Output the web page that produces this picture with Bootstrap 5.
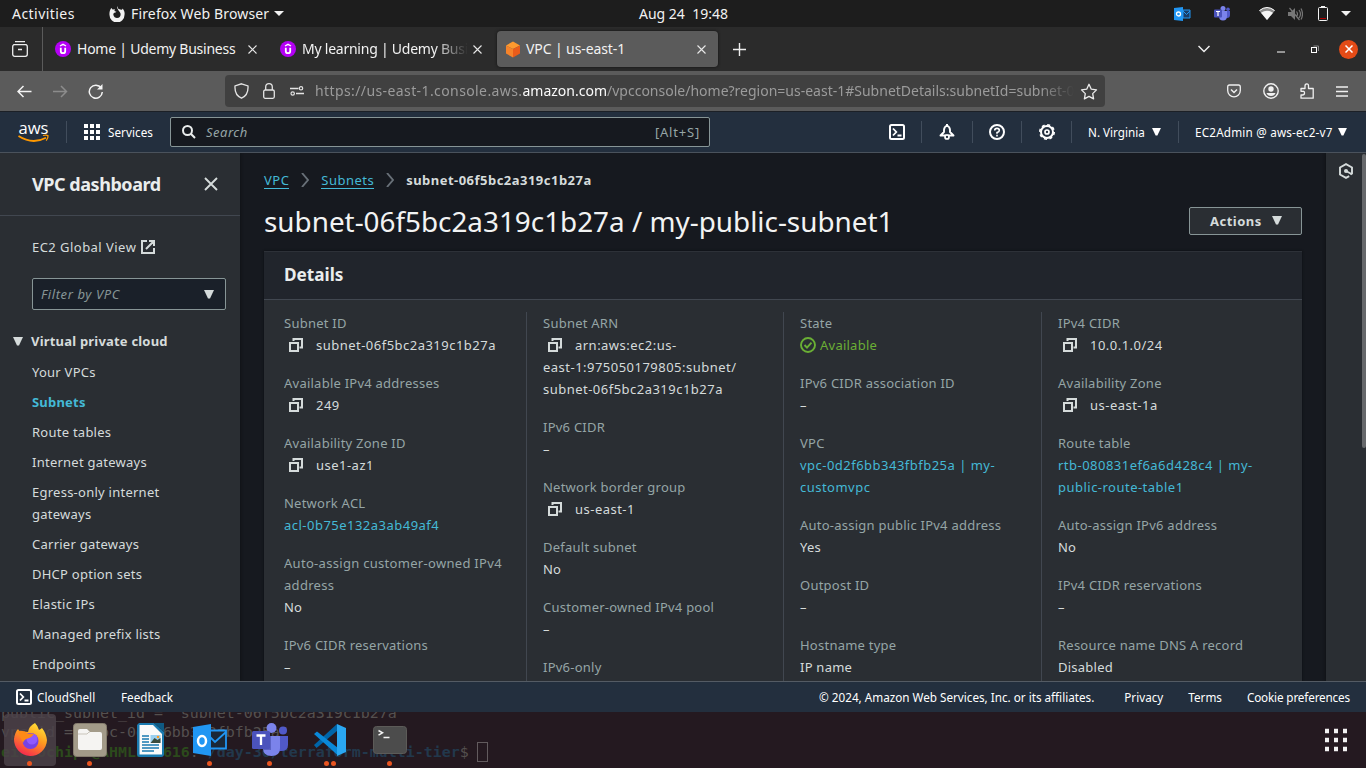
<!DOCTYPE html>
<html lang="en">
<head>
<meta charset="utf-8">
<title>VPC | us-east-1</title>
<link href="https://cdn.jsdelivr.net/npm/bootstrap@5.3.0/dist/css/bootstrap.min.css" rel="stylesheet">
<style>
:root{--line:#414750;--panel:#2a2e33;--navy:#232f3e;--txt:#d5dbdb;--mut:#95a5a6;--link:#44b9d6}
body{width:1366px;height:768px;overflow:hidden;background:#16191f;font-family:"Noto Sans",sans-serif;font-size:13px;line-height:22px;color:var(--txt)}
svg{flex:none;display:block}
.ui{font-family:"Noto Sans",sans-serif;font-size:14px;color:#f2f2f2;white-space:nowrap}
.sysbar{height:27px;background:#1d1d1d}
.tabs-row{height:44px;background:#2b2b2b}
.tabview{width:43px;border-right:1px solid #5b5b5b}
.btab{height:36px;border-radius:4px}
.t1{letter-spacing:-.24px}
.btab.current{background:#5b5b5b;width:221px;box-shadow:0 0 3px #111}
.toolrow{height:41px;background:#5b5b5b;border-bottom:1px solid #1c2026}
.urlbox{width:880px;height:32px;border-radius:4px;background:#404040;color:#9b9b9b;margin-left:121px}
.fade-end{-webkit-mask-image:linear-gradient(90deg,#000 calc(100% - 34px),transparent);mask-image:linear-gradient(90deg,#000 calc(100% - 34px),transparent)}
.closer{width:19px;height:19px;border-radius:50%;background:#e44b17}
.awsnav{height:41px;background:var(--navy);border-bottom:1px solid #4a525c;color:#fff;font-size:11.7px;white-space:nowrap}
.vsep{width:1px;height:22px;background:#414d5c;flex:none}
.awsearch{width:540px;height:30px;background:#16191f;border:1px solid #879596;border-radius:2px;color:#95a5a6;font-size:13px;letter-spacing:.5px}
.stage{height:528px;overflow:hidden}
.side{width:240px;background:var(--panel);box-shadow:0 0 3px #0c0e11;letter-spacing:.2px;flex:none}
.side-head{height:63px;border-bottom:1px solid var(--line);padding:0 22px 0 32px}
.side-head h2{font-size:18px;font-weight:700;margin:1px 0 0;color:#eaeded;letter-spacing:-.45px}
.vpcfilter{width:194px;height:32px;border:1px solid #879596;border-radius:2px;background:#1a2029;color:#879596;margin:20px 0 0 32px;letter-spacing:.6px}
.side ul{padding-left:32px;width:215px;letter-spacing:.25px}
.side li{margin-bottom:8px}
.on{color:var(--link);font-weight:700;letter-spacing:.2px}
.work{padding:0 24px;width:1086px;flex:none}
.crumbs{height:22px;margin-top:16px;letter-spacing:.48px}
.crumbs a{color:var(--link);text-decoration:none;border-bottom:1px solid;line-height:16px}
h1{font-size:27.85px;margin:1px 0 0;color:#f2f3f3;font-weight:400;white-space:nowrap}
.actbtn{width:113px;height:28px;border:1px solid #879596;border-radius:2px;background:var(--panel);color:var(--txt);font-weight:700;font-size:13px;letter-spacing:.5px;padding:0 0 0 20px;margin-top:-1px}
.panelbox{background:var(--panel);border-top:1px solid #2d3138;height:460px;box-shadow:0 0 2px #0c0e11}
.panel-head{height:48px;background:#21252c;border-bottom:1px solid var(--line);font-size:17.200px;font-weight:700;color:#eaeded;padding:0 0 2px 20px}
.kcols{padding:12px 0 0 20px;height:412px}
.kcol{letter-spacing:.24px;overflow:hidden}
.kcol+.kcol{border-left:1px solid var(--line);padding-left:16px}
.kcol dl{margin:0}
.kcol dt{font-weight:400;color:var(--mut)}
.kcol dd{margin:0 0 16px}
.kcol .val{letter-spacing:.48px}
.kcol a{color:var(--link);text-decoration:none}
.cp{display:inline-block;width:14px;height:14px;margin:0 13px 0 5px;vertical-align:-2px}
.w1{width:242px}.w2{width:257px}.w3{width:258px}.w4{width:258px}
.rail{width:40px;background:var(--panel);box-shadow:0 0 3px #0c0e11;padding:10px 0 0 13px;flex:none}
.scrollthumb{top:154px;right:0;width:4px;height:294px;background:#66686b;border-radius:2px}
.foot{height:31px;background:var(--navy);border-top:1px solid #545b64;color:#fff;font-size:11.7px;white-space:nowrap;position:relative}
.dock{height:56px;background:#241920;overflow:hidden}
.term{left:1px;top:-8px;font:14.950px/19px "DejaVu Sans Mono",monospace;color:#54504f;white-space:pre;margin:0;overflow:hidden}
.term b{color:#2c4a1c}.term i{font-style:normal;font-weight:700;color:#22384c}
.cursorbox{display:inline-block;width:11px;height:20px;border:1px solid #625b5e;vertical-align:-5px;margin-left:-1px}
.app{width:60px;height:56px;padding-top:11px}
.app.lit::before{content:"";position:absolute;left:4px;top:2px;width:52px;height:52px;border-radius:4px;background:#4b4249d9}
.app svg{position:relative}
.pip{width:5px;height:5px;border-radius:50%;background:#e95420}
.pips{gap:2px;left:0;right:1px;bottom:2px}
</style>
<script src="https://cdn.jsdelivr.net/npm/bootstrap@5.3.0/dist/js/bootstrap.bundle.min.js"></script>
</head>
<body class="d-flex flex-column">
<svg width="0" height="0" class="position-absolute">
<symbol id="copy" viewBox="0 0 14 14"><path d="M1 5h8v8H1zM4.500 3V1H13v8.500h-2.500" fill="none" stroke="#d5dbdb" stroke-width="2"/></symbol>
<symbol id="x" viewBox="0 0 9 9"><path d="M.5.5l8 8m0-8l-8 8" stroke="#e8e8e8" stroke-width="1.100" fill="none"/></symbol>
<symbol id="tri" viewBox="0 0 10 9"><path d="M0 0h10L6 8.500H4z" fill="currentColor"/></symbol>
<symbol id="udemy" viewBox="0 0 16 16"><circle cx="8" cy="8" r="8" fill="#b400f5"/><path d="M5 5L8 3.400 11 5" fill="none" stroke="#fff" stroke-width="1.400"/><path d="M5.800 6.800v3.400q0 2 2.200 2t2.200-2V6.800" fill="none" stroke="#fff" stroke-width="1.800"/></symbol>
<symbol id="shell" viewBox="0 0 16 16"><rect x="1" y="1" width="14" height="14" rx="1.500" fill="none" stroke="#fff" stroke-width="2"/><path d="M4 4.500L7.300 8 4 11.500M8.500 11.500h4" fill="none" stroke="#fff" stroke-width="1.800"/></symbol>
</svg>

<div class="sysbar ui d-flex align-items-center">
<span style="margin-left:12px;width:97px;letter-spacing:.45px">Activities</span>
<svg width="16" height="16" viewBox="0 0 16 16"><path d="M8 0l1.500 3C13 4 13.500 4 13.500 2.500 15 4 16 6 15.500 9A7.500 7.500 0 0 1 .5 9C.2 6 1 3.500 2.500 2l1 1.500L6 3.200C5 5 5.500 5.500 7.500 5.800 6 7 4.500 6.500 4.300 8.500 4.500 11 6.500 12 8 12c3 0 4-2.500 3.500-4.500C11 5.500 8 4 8 0z" fill="#f2f2f2"/></svg>
<span style="margin-left:6px;width:143px;letter-spacing:.15px">Firefox Web Browser</span>
<svg width="10" height="5"><path d="M0 0h10L5 5z" fill="#f2f2f2"/></svg>
<span style="margin-left:355px">Aug 24&nbsp; 19:48</span>
<div class="d-flex align-items-center ms-auto" style="padding-right:15px">
<svg width="17" height="14" viewBox="0 0 17 14"><path d="M9 3h7v8H9z" fill="#1a3d66" stroke="#2196f3"/><path d="M9 4l3.500 3.500L16 4" stroke="#2196f3" fill="none"/><path d="M0 1l9-1v14l-9-1z" fill="#2196f3"/><circle cx="4.500" cy="7" r="2" fill="none" stroke="#fff" stroke-width="1.300"/></svg>
<svg style="margin-left:23px" width="17" height="15" viewBox="0 0 17 15"><circle cx="9" cy="2.500" r="2.500" fill="#7b83eb"/><circle cx="14" cy="3.200" r="1.800" fill="#5059c9"/><path d="M11 5h5v4q0 3-3 3h-2z" fill="#5059c9"/><path d="M5 5h8v5q0 4.500-4 4.500T5 10z" fill="#7b83eb"/><rect y="3.500" width="8" height="8" rx="1" fill="#4b53bc"/><path d="M2 5.500h4M4 5.500v4.500" stroke="#fff" stroke-width="1.200"/></svg>
<svg style="margin-left:28px" width="16" height="13" viewBox="0 0 16 13"><path d="M8 13L0 3.500Q8-3 16 3.500z" fill="#8c8c8c"/><path d="M8 13L2 5.800Q8 1.500 14 5.800z" fill="#f6f6f6"/><path d="M.5 3.500Q8-2.500 15.500 3.500" fill="none" stroke="#fff"/></svg>
<svg style="margin-left:13px" width="15" height="14" viewBox="0 0 15 14"><path d="M0 5h3l4-4v12L3 9H0z" fill="#777"/><path d="M8.500 4.500q2 2.500 0 5M11 3q3 4 0 8M13 1.500q3 5.500 0 11M1.500 1l10 12" stroke="#777" fill="none" stroke-width="1.200"/></svg>
<svg style="margin-left:15px" width="10" height="15" viewBox="0 0 10 15"><path d="M3 0h4v2H3z" fill="#f2f2f2"/><rect x=".5" y="1.500" width="9" height="13" rx="1" fill="none" stroke="#f2f2f2"/><path d="M2 12.500h6" stroke="#b00000"/></svg>
<svg style="margin-left:13px" width="10" height="5"><path d="M0 0h10L5 5z" fill="#f2f2f2"/></svg>
</div>
</div>

<div class="tabs-row ui d-flex align-items-center">
<div class="tabview h-100 d-flex align-items-center"><svg style="margin-left:12px" width="16" height="16" viewBox="0 0 16 16"><path d="M3 .7h10M1.500 3.500h13" stroke="#eee" stroke-width="1.200"/><rect x=".7" y="3.700" width="14.600" height="11.600" rx="2" fill="none" stroke="#eee" stroke-width="1.300"/><path d="M6 8.500h4" stroke="#eee" stroke-width="1.500"/></svg></div>
<div class="btab d-flex align-items-center" style="width:225px;padding-left:12px"><svg width="16" height="16"><use href="#udemy"/></svg><span class="t1" style="margin-left:6px;width:171px">Home | Udemy Business</span><svg width="9" height="9"><use href="#x"/></svg></div>
<div class="btab d-flex align-items-center" style="width:229px;padding-left:12px"><svg width="16" height="16"><use href="#udemy"/></svg><span class="t1 overflow-hidden fade-end" style="margin-left:6px;width:166px">My learning | Udemy Business</span><svg style="margin-left:5px" width="9" height="9"><use href="#x"/></svg></div>
<div class="btab current d-flex align-items-center" style="padding-left:8px"><svg width="16" height="17" viewBox="0 0 16 17"><path d="M1 4.500l7-4 7 4-7 3.500z" fill="#ff9a2e"/><path d="M1 4.500L8 8v8.500l-7-4z" fill="#f5832a"/><path d="M15 4.500L8 8v8.500l7-4z" fill="#ea5c1a"/></svg><span style="margin-left:5px;width:171px;letter-spacing:-.1px">VPC | us-east-1</span><svg width="9" height="9"><use href="#x"/></svg></div>
<svg style="margin-left:15px" width="13" height="13"><path d="M0 6.500h13M6.500 0v13" stroke="#eee" stroke-width="1.400"/></svg>
<svg style="margin-left:452px" width="12" height="8"><path d="M.5 1l5.500 5.500L11.500 1" fill="none" stroke="#eee" stroke-width="1.500"/></svg>
<svg style="margin-left:67px;margin-top:5px" width="8" height="2"><path d="M0 1h8" stroke="#fff"/></svg>
<svg style="margin-left:26px" width="8" height="9"><path d="M2.500 1h5v5" stroke="#888" fill="none"/><rect x=".5" y="2.500" width="5" height="5" stroke="#fff" fill="none"/></svg>
<div class="closer d-flex align-items-center justify-content-center" style="margin-left:20px"><svg width="8" height="8" viewBox="0 0 8 8"><path d="M.5.5l7 7m0-7l-7 7" stroke="#fff" stroke-width="1.500"/></svg></div>
</div>

<div class="toolrow ui d-flex align-items-center">
<svg style="margin-left:17px" width="15" height="13"><path d="M14.500 6.500H1M6.500 1L1 6.500 6.500 12" stroke="#f4f4f4" stroke-width="1.500" fill="none"/></svg>
<svg style="margin-left:21px" width="15" height="13"><path d="M0 6.500h13.500M8 1l5.500 5.500L8 12" stroke="#8c8c8c" stroke-width="1.500" fill="none"/></svg>
<svg style="margin-left:20px" width="16" height="15" viewBox="0 0 16 15"><path d="M13.200 4A6.500 6.500 0 1 0 14.300 8" stroke="#f4f4f4" stroke-width="1.500" fill="none"/><path d="M14.500 0v5.500H9z" fill="#f4f4f4"/></svg>
<div class="urlbox d-flex align-items-center">
<svg style="margin-left:9px" width="15" height="16" viewBox="0 0 15 16"><path d="M7.500.8L14 3c.4 6-1.500 10-6.500 12.200C2.500 13 .6 9 1 3z" stroke="#e4e4e4" stroke-width="1.300" fill="none"/></svg>
<svg style="margin-left:14px" width="12" height="16" viewBox="0 0 12 16"><rect x=".7" y="7" width="10.600" height="8.300" rx="1.500" stroke="#e4e4e4" stroke-width="1.300" fill="none"/><path d="M2.700 7V4q0-3.300 3.300-3.300T9.300 4v3" stroke="#e4e4e4" stroke-width="1.300" fill="none"/></svg>
<svg style="margin-left:15px" width="14" height="10" viewBox="0 0 14 10"><path d="M0 2.500h8.500M6 7.500h8" stroke="#e4e4e4" stroke-width="1.300"/><circle cx="11" cy="2.300" r="1.700" stroke="#e4e4e4" stroke-width="1.200" fill="none"/><circle cx="2.700" cy="7.500" r="1.700" stroke="#e4e4e4" stroke-width="1.200" fill="none"/></svg>
<div class="overflow-hidden fade-end" style="margin-left:11px;width:759px"><span style="letter-spacing:.4px">https://us-east-1.console.aws.</span><span style="color:#fbfbfb">amazon.com</span>/vpcconsole/home?region=us-east-1#SubnetDetails:subnetId=subnet-06f5bc2a319c1b27a</div>
<svg style="margin-left:6px" width="18" height="17" viewBox="0 0 18 17"><path d="M9 1.300l2.300 4.900 5.200.7-3.800 3.700.9 5.300L9 13.400l-4.600 2.500.9-5.300L1.500 6.900l5.200-.7z" stroke="#ececec" stroke-width="1.300" fill="none" stroke-linejoin="round"/></svg>
</div>
<svg style="margin-left:122px" width="14" height="14" viewBox="0 0 14 14"><path d="M2.500 1h9Q13.300 1 13.300 3v3.500a6.300 6.300 0 0 1-12.600 0V3Q.7 1 2.500 1z" stroke="#f0f0f0" stroke-width="1.300" fill="none"/><path d="M4 5.500l3 3 3-3" stroke="#f0f0f0" stroke-width="1.500" fill="none"/></svg>
<svg style="margin-left:22px" width="16" height="16" viewBox="0 0 16 16"><circle cx="8" cy="8" r="7.200" stroke="#f0f0f0" stroke-width="1.400" fill="none"/><circle cx="8" cy="6" r="2.700" fill="#f0f0f0"/><path d="M3.500 10h9q-1 3-4.500 3t-4.500-3z" fill="#f0f0f0"/></svg>
<svg style="margin-left:21px" width="14" height="16" viewBox="0 0 14 16"><path d="M1 5.500h4V3q0-2.200 1.800-2.200T8.500 3v2.500h4.700v9.700H1V12h1.500Q4.500 12 4.500 10T2.500 8.300H1z" stroke="#f0f0f0" stroke-width="1.300" fill="none" stroke-linejoin="round"/></svg>
<svg style="margin-left:22px" width="12" height="11"><path d="M0 1h12M0 5.500h12M0 10h12" stroke="#f0f0f0" stroke-width="1.300"/></svg>
</div>

<nav class="awsnav d-flex align-items-center">
<svg style="margin-left:18px" width="32" height="25" viewBox="0 0 32 25"><text x=".5" y="13.500" textLength="30" lengthAdjust="spacingAndGlyphs" font-family="Open Sans" font-weight="500" font-size="16" fill="#fff">aws</text><path d="M.5 16q14 9 27.500 1.700" stroke="#f90" stroke-width="1.800" fill="none"/><path d="M25 15.500q3.500-1 5 .2.300 2.500-1.800 5" stroke="#f90" stroke-width="1.300" fill="none"/></svg>
<div class="vsep" style="margin-left:16px"></div>
<svg style="margin-left:17px" width="16" height="16" viewBox="0 0 16 16"><path d="M0 2h4m2 0h4m2 0h4M0 8h4m2 0h4m2 0h4M0 14h4m2 0h4m2 0h4" stroke="#fff" stroke-width="4"/></svg>
<span style="margin-left:8px;width:62px;letter-spacing:.05px">Services</span>
<div class="awsearch d-flex align-items-center"><svg style="margin-left:11px" width="14" height="14" viewBox="0 0 14 14"><circle cx="5.500" cy="5.500" r="4.500" stroke="#eaeded" stroke-width="2" fill="none"/><path d="M8.800 8.800L13 13" stroke="#eaeded" stroke-width="2"/></svg><i style="margin-left:10px">Search</i><span class="ms-auto" style="margin-right:9px;letter-spacing:.8px">[Alt+S]</span></div>
<svg style="margin-left:179px" width="16" height="16"><use href="#shell"/></svg><div class="vsep" style="margin-left:16px"></div>
<svg style="margin-left:17px" width="16" height="16" viewBox="0 0 16 16"><path d="M1.500 11.500L5 8V6q0-3 3-4.500Q11 3 11 6v2l3.500 3.500z" stroke="#fff" stroke-width="1.900" fill="none" stroke-linejoin="round"/><path d="M8 0v2" stroke="#fff" stroke-width="2"/><circle cx="8" cy="13" r="2" stroke="#fff" stroke-width="1.700" fill="#232f3e"/></svg><div class="vsep" style="margin-left:17px"></div>
<svg style="margin-left:16px" width="16" height="16" viewBox="0 0 16 16"><circle cx="8" cy="8" r="7" stroke="#fff" stroke-width="2" fill="none"/><path d="M5.700 6.500Q5.700 4.400 8 4.400t2.300 2Q10.300 7.700 8 8.500v1.200M8 10.800v1.800" stroke="#fff" stroke-width="1.600" fill="none"/></svg><div class="vsep" style="margin-left:16px"></div>
<svg style="margin-left:17px" width="16" height="16" viewBox="0 0 16 16"><circle cx="8" cy="8" r="6" stroke="#fff" stroke-width="2" fill="none"/><circle cx="8" cy="8" r="7.200" stroke="#fff" stroke-width="1.600" stroke-dasharray="3 2.655" fill="none"/><circle cx="8" cy="8" r="2" stroke="#fff" stroke-width="1.700" fill="none"/></svg><div class="vsep" style="margin-left:16px"></div>
<span style="margin-left:16px;width:64px">N. Virginia</span><svg width="9" height="8" viewBox="0 0 10 9"><use href="#tri"/></svg><div class="vsep" style="margin-left:17px"></div>
<span style="margin-left:16px;width:143px;letter-spacing:.2px">EC2Admin @ aws-ec2-v7</span><svg width="9" height="8" viewBox="0 0 10 9"><use href="#tri"/></svg>
</nav>

<div class="stage d-flex">
<aside class="side">
<div class="side-head d-flex align-items-center justify-content-between"><h2>VPC dashboard</h2><svg width="14" height="14"><path d="M1 1l12 12m0-12L1 13" stroke="#d5dbdb" stroke-width="1.900"/></svg></div>
<div class="d-flex align-items-center" style="margin:20px 0 0 32px;letter-spacing:.46px">EC2 Global View<svg style="margin-left:5px" width="14" height="14"><path d="M6 1H1v12h12V8M8 1h5v5M13 1L5 9" stroke="#d5dbdb" stroke-width="2" fill="none"/></svg></div>
<div class="vpcfilter d-flex align-items-center justify-content-between" style="padding:0 11px 0 8px"><i>Filter by VPC</i><svg width="10" height="9" color="#d5dbdb"><use href="#tri"/></svg></div>
<div class="d-flex align-items-center fw-bold" style="margin:20px 0 9px 13px"><svg width="10" height="9" color="#d5dbdb"><use href="#tri"/></svg><span style="margin-left:8px">Virtual private cloud</span></div>
<ul class="list-unstyled"><li>Your VPCs</li><li class="on">Subnets</li><li>Route tables</li><li>Internet gateways</li><li>Egress-only internet<br>gateways</li><li>Carrier gateways</li><li>DHCP option sets</li><li>Elastic IPs</li><li>Managed prefix lists</li><li>Endpoints</li></ul>
</aside>
<main class="work">
<div class="crumbs d-flex align-items-center"><a href="#">VPC</a><svg style="margin:0 12px" width="8" height="14"><path d="M1 0l6 7-6 7" stroke="#687078" stroke-width="1.900" fill="none"/></svg><a href="#">Subnets</a><svg style="margin:0 12px" width="8" height="14"><path d="M1 0l6 7-6 7" stroke="#687078" stroke-width="1.900" fill="none"/></svg><b>subnet-06f5bc2a319c1b27a</b></div>
<div class="d-flex align-items-center justify-content-between" style="height:60px"><h1>subnet-06f5bc2a319c1b27a / my-public-subnet1</h1><button class="actbtn d-flex align-items-center">Actions<svg style="margin-left:10px" width="10" height="9"><use href="#tri"/></svg></button></div>
<section class="panelbox">
<div class="panel-head d-flex align-items-center">Details</div>
<div class="kcols d-flex">
<div class="kcol w1"><dl>
<dt>Subnet ID</dt><dd class="val"><svg class="cp"><use href="#copy"/></svg>subnet-06f5bc2a319c1b27a</dd>
<dt>Available IPv4 addresses</dt><dd class="val"><svg class="cp"><use href="#copy"/></svg>249</dd>
<dt>Availability Zone ID</dt><dd class="val"><svg class="cp"><use href="#copy"/></svg>use1-az1</dd>
<dt>Network ACL</dt><dd class="val"><a href="#">acl-0b75e132a3ab49af4</a></dd>
<dt style="letter-spacing:.3px">Auto-assign customer-owned IPv4<br>address</dt><dd>No</dd>
<dt>IPv6 CIDR reservations</dt><dd>–</dd></dl></div>
<div class="kcol w2"><dl>
<dt>Subnet ARN</dt><dd class="val"><svg class="cp"><use href="#copy"/></svg>arn:aws:ec2:us-<br>east-1:975050179805:subnet/<br>subnet-06f5bc2a319c1b27a</dd>
<dt>IPv6 CIDR</dt><dd>–</dd>
<dt>Network border group</dt><dd class="val"><svg class="cp"><use href="#copy"/></svg>us-east-1</dd>
<dt>Default subnet</dt><dd>No</dd>
<dt>Customer-owned IPv4 pool</dt><dd>–</dd>
<dt>IPv6-only</dt><dd>No</dd></dl></div>
<div class="kcol w3"><dl>
<dt>State</dt><dd class="d-flex align-items-center" style="color:#6aaf35"><svg width="16" height="16" viewBox="0 0 16 16" style="margin-right:4px"><circle cx="8" cy="8" r="7" stroke="#6aaf35" stroke-width="1.900" fill="none"/><path d="M4.500 8l2.500 2.700 4.500-5" stroke="#6aaf35" stroke-width="1.900" fill="none"/></svg>Available</dd>
<dt>IPv6 CIDR association ID</dt><dd>–</dd>
<dt>VPC</dt><dd class="val"><a href="#">vpc-0d2f6bb343fbfb25a | my-<br>customvpc</a></dd>
<dt>Auto-assign public IPv4 address</dt><dd>Yes</dd>
<dt>Outpost ID</dt><dd>–</dd>
<dt>Hostname type</dt><dd>IP name</dd></dl></div>
<div class="kcol w4"><dl>
<dt>IPv4 CIDR</dt><dd class="val"><svg class="cp"><use href="#copy"/></svg>10.0.1.0/24</dd>
<dt>Availability Zone</dt><dd class="val"><svg class="cp"><use href="#copy"/></svg>us-east-1a</dd>
<dt>Route table</dt><dd class="val"><a href="#">rtb-080831ef6a6d428c4 | my-<br>public-route-table1</a></dd>
<dt>Auto-assign IPv6 address</dt><dd>No</dd>
<dt>IPv4 CIDR reservations</dt><dd>–</dd>
<dt>Resource name DNS A record</dt><dd>Disabled</dd></dl></div>
</div>
</section>
</main>
<aside class="rail"><svg width="14" height="16" viewBox="0 0 14 16"><path d="M11.500 11.500L13 10.500V4.500L7 1.200 1 4.500v7l6 3.300 3.200-1.700" stroke="#d5dbdb" stroke-width="1.900" fill="none"/><circle cx="7" cy="8" r="2" fill="#d5dbdb"/><path d="M7 8l5.500 3" stroke="#d5dbdb" stroke-width="1.900"/></svg></aside>
</div>
<div class="scrollthumb position-absolute"></div>

<footer class="foot d-flex align-items-center">
<svg style="margin-left:16px" width="16" height="16"><use href="#shell"/></svg><span style="margin-left:5px;width:84px">CloudShell</span><span>Feedback</span>
<span class="ms-auto">© 2024, Amazon Web Services, Inc. or its affiliates.</span><span style="margin-left:30px">Privacy</span><span style="margin-left:25px">Terms</span><span style="margin:0 16px 0 25px;letter-spacing:-.14px">Cookie preferences</span>
</footer>

<div class="dock d-flex position-relative">
<pre class="term position-absolute">public_subnet_id = "subnet-06f5bc2a319c1b27a"
vpc_id = "vpc-0d2f6bb343fbfb25a"
<b>einfochips@AHMLPT1616</b>:<i>~/day-30/terraform-multi-tier</i>$ <span class="cursorbox"></span></pre>
<div class="app lit position-relative d-flex justify-content-center"><svg width="34" height="34" viewBox="0 0 34 34"><defs><linearGradient id="ff" x1=".8" y1="0" x2=".3" y2="1"><stop offset="0" stop-color="#ffe83a"/><stop offset=".45" stop-color="#ff9a1f"/><stop offset="1" stop-color="#f5254f"/></linearGradient></defs><path d="M22 0q3 3 4 7 2-1 3-2 4 5 5 12A16.500 16.500 0 1 1 1 16Q2 9 5 6l2 3q4-1 8 0 1-6 7-9z" fill="url(#ff)"/><circle cx="17.500" cy="18" r="8" fill="#7542e5"/><circle cx="19" cy="16" r="5.500" fill="#9059ff"/><path d="M5 8q6-1 10 3 3-1 6 0-2 3-5 4-5 1-6 5-3-6-5-12z" fill="#ff8a16"/></svg><div class="pips position-absolute d-flex justify-content-center"><i class="pip"></i></div></div>
<div class="app position-relative d-flex justify-content-center"><svg width="34" height="34" viewBox="0 0 34 34"><rect x=".5" y=".5" width="33" height="33" rx="3" fill="#a39b89" stroke="#857d6e"/><path d="M5 8q0-2 2-2h7l3 3h10q2 0 2 2v14q0 2-2 2H7q-2 0-2-2z" fill="#f5f4f2"/><path d="M5 11h9l2-2h1" stroke="#c9c4ba" fill="none"/></svg><div class="pips position-absolute d-flex justify-content-center"><i class="pip"></i></div></div>
<div class="app position-relative d-flex justify-content-center"><svg width="34" height="34" viewBox="0 0 34 34"><path d="M6 0h15l10 9v22q0 3-3 3H7q-3 0-3-3V2z" fill="#1a7ab0"/><path d="M21 0h10v9z" fill="#0f5a83"/><path d="M6.500 2H20l9 9v20.500H6.500z" fill="#fafafa"/><path d="M9 13h7M9 16h7M9 19h7M9 22h17M9 25h17M9 28h12" stroke="#1a7ab0" stroke-width="1.300"/><rect x="17.500" y="12" width="10" height="8" fill="#9ad0f0"/><path d="M17.500 20l4-5 3 2 3-2v5z" fill="#3a4b3c"/><circle cx="25" cy="14" r="1.200" fill="#ff9a1f"/></svg></div>
<div class="app position-relative d-flex justify-content-center"><svg width="36" height="34" viewBox="0 0 36 34"><path d="M18 7.500h16v18H18z" fill="#1b2838" stroke="#2196f3" stroke-width="1.800"/><path d="M18 14l5 5 11-10" stroke="#2196f3" stroke-width="1.800" fill="none"/><path d="M1 4l18-3v32L1 30z" fill="#2196f3"/><ellipse cx="10" cy="18" rx="4" ry="5" stroke="#fff" stroke-width="2.500" fill="none"/></svg><div class="pips position-absolute d-flex justify-content-center"><i class="pip"></i></div></div>
<div class="app position-relative d-flex justify-content-center"><svg width="36" height="34" viewBox="0 0 36 34"><circle cx="19.500" cy="5" r="5" fill="#7b83eb"/><circle cx="31" cy="7.500" r="4" fill="#5059c9"/><path d="M26 13h10v9q0 6-7 6h-3z" fill="#5059c9"/><path d="M11 13h17v12q0 8-8.500 8T11 25z" fill="#7b83eb"/><path d="M11 13h8v14h-8z" fill="#5a62c3"/><rect y="8" width="18" height="18" rx="1.500" fill="#4b53bc"/><path d="M4.500 12.500h9M9 12.500V22" stroke="#fff" stroke-width="2.300"/></svg><div class="pips position-absolute d-flex justify-content-center"><i class="pip"></i></div></div>
<div class="app position-relative d-flex justify-content-center"><svg width="34" height="34" viewBox="0 0 34 34"><path d="M1 22l2.500 3L24 8V1z" fill="#0065a9"/><path d="M1 11l3-2.500L25 25v7.500z" fill="#0a88d8"/><path d="M24 1l9 4v24l-9 4z" fill="#2aa7f2"/></svg><div class="pips position-absolute d-flex justify-content-center"><i class="pip"></i><i class="pip"></i></div></div>
<div class="app position-relative d-flex justify-content-center"><svg width="34" height="34" viewBox="0 0 34 34"><rect x=".5" y="3.500" width="33" height="27" rx="3" fill="#4c4c4c" stroke="#5c5b58"/><path d="M5.500 7.500l4 2.300-4 2.300M10.500 14.500h6" stroke="#f4f4f4" stroke-width="1.500" fill="none"/></svg><div class="pips position-absolute d-flex justify-content-center"><i class="pip"></i></div></div>
<svg class="ms-auto" style="margin:16px 18px 0 0" width="24" height="24" viewBox="0 0 24 24"><path d="M1 3h4m5 0h4m5 0h4M1 12h4m5 0h4m5 0h4M1 21h4m5 0h4m5 0h4" stroke="#f2f2f2" stroke-width="4.500"/></svg>
</div>
</body>
</html>
